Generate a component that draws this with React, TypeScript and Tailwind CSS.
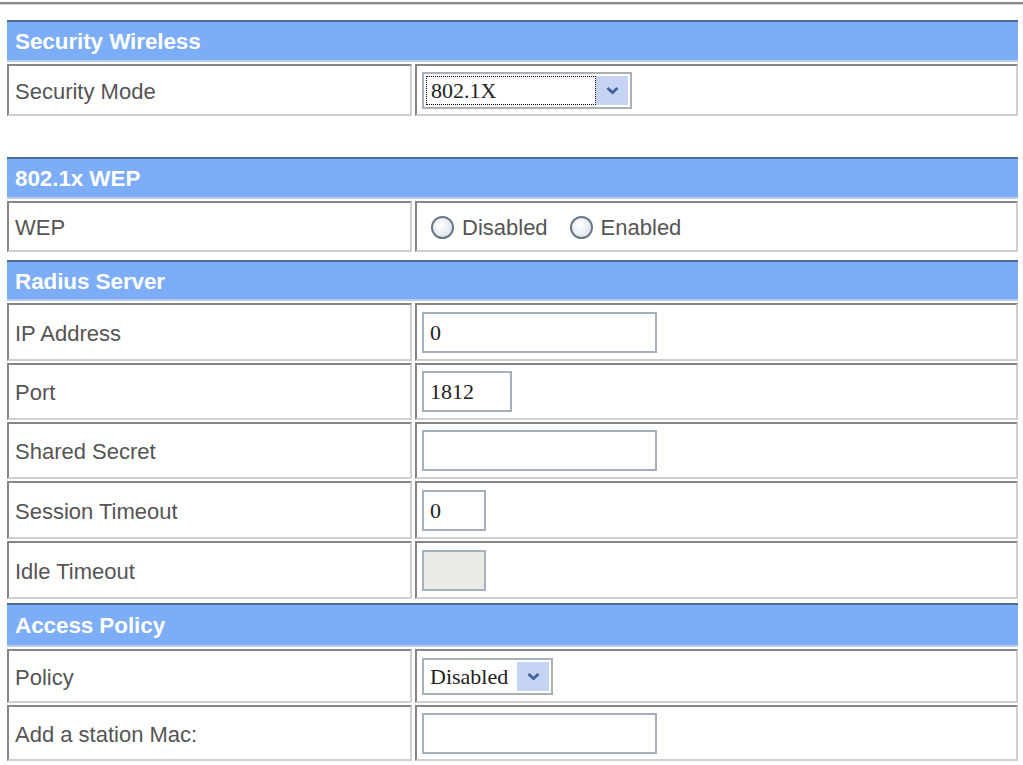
import React from 'react';

type RowProps = { label: string; h: string; children?: React.ReactNode };

// inset-style table cell borders, like an old router admin page
const cell =
  'border-2 border-t-[#858585] border-l-[#858585] border-b-[#cfcfcf] border-r-[#cfcfcf] bg-white flex items-center';

const SectionHeader = ({ title, h = 'h-[42px]' }: { title: string; h?: string }) => (
  <div className={`${h} bg-[#7cadf6] border-t-2 border-t-[#4d6a98] border-b-2 border-b-[#b8cbe8] flex items-center pl-[8px] pt-[2px]`}>
    <span className="text-white font-bold text-[22.5px] tracking-[-0.1px]">{title}</span>
  </div>
);

const Row = ({ label, h, children }: RowProps) => (
  <div className={`grid grid-cols-[405px_1fr] gap-[3px] ${h}`}>
    <div className={`${cell} pl-[6px] pt-[2px] text-[22px] text-[#555]`}>{label}</div>
    <div className={`${cell} pl-[5px]`}>{children}</div>
  </div>
);

const Chevron = () => (
  <svg width="15" height="10" viewBox="0 0 15 10">
    <polyline points="2.5,3 7.5,7.5 12.5,3" fill="none" stroke="#40609f" strokeWidth="2.8" />
  </svg>
);

const Select = ({ value, width, focused }: { value: string; width: string; focused?: boolean }) => (
  <div className={`${width} h-[37px] border-2 border-[#a9b0b8] bg-white flex items-stretch p-[2px]`}>
    <div
      className={`flex-1 flex items-center pl-[4px] font-['Liberation_Serif'] text-[22px] text-[#222] ${
        focused ? 'border border-dotted border-black' : ''
      }`}
    >
      {value}
    </div>
    <div className="w-[32px] bg-[#c4d4f2] flex items-center justify-center">
      <Chevron />
    </div>
  </div>
);

const TextBox = ({ value = '', width, disabled }: { value?: string; width: string; disabled?: boolean }) => (
  <div
    className={`${width} h-[41px] border-2 border-[#a7b0ba] flex items-center pl-[6px] font-['Liberation_Serif'] text-[22px] text-[#222] ${
      disabled ? 'bg-[#ebebe6]' : 'bg-white'
    }`}
  >
    {value}
  </div>
);

const Radio = ({ label }: { label: string }) => (
  <span className="flex items-center gap-[8px] text-[22px] text-[#555]">
    <span className="w-[23px] h-[23px] rounded-full border-2 border-[#6b7886] bg-[radial-gradient(circle_at_40%_40%,#ffffff,#d6dee6)]" />
    {label}
  </span>
);

export default function App() {
  return (
    <div className="w-[1023px] h-[765px] overflow-hidden bg-white font-['Liberation_Sans',Arial,sans-serif]">
      <div className="mt-[2px] h-[2px] bg-[#8a8a8a]" />
      <div className="h-px bg-[#d6d6d6]" />

      <div className="pl-[7px] pr-[5px] pt-[15px] flex flex-col">
        <div className="flex flex-col gap-[2px]">
          <SectionHeader title="Security Wireless" />
          <Row label="Security Mode" h="h-[52px]">
            <Select value="802.1X" width="w-[210px]" focused />
          </Row>
        </div>

        <div className="mt-[41px] flex flex-col gap-[2px]">
          <SectionHeader title="802.1x WEP" />
          <Row label="WEP" h="h-[51px]">
            <div className="flex items-center gap-[22px] pl-[9px] pt-[2px]">
              <Radio label="Disabled" />
              <Radio label="Enabled" />
            </div>
          </Row>
        </div>

        <div className="mt-[8px] flex flex-col gap-[2px]">
          <SectionHeader title="Radius Server" h="h-[41px]" />
          <Row label="IP Address" h="h-[58px]">
            <TextBox value="0" width="w-[235px]" />
          </Row>
          <Row label="Port" h="h-[57px]">
            <TextBox value="1812" width="w-[90px]" />
          </Row>
          <Row label="Shared Secret" h="h-[57px]">
            <TextBox width="w-[235px]" />
          </Row>
          <Row label="Session Timeout" h="h-[58px]">
            <TextBox value="0" width="w-[64px]" />
          </Row>
          <Row label="Idle Timeout" h="h-[58px]">
            <TextBox width="w-[64px]" disabled />
          </Row>
        </div>

        <div className="mt-[4px] flex flex-col gap-[2px]">
          <SectionHeader title="Access Policy" h="h-[44px]" />
          <Row label="Policy" h="h-[54px]">
            <Select value="Disabled" width="w-[131px]" />
          </Row>
          <Row label="Add a station Mac:" h="h-[56px]">
            <TextBox width="w-[235px]" />
          </Row>
        </div>
      </div>
    </div>
  );
}
